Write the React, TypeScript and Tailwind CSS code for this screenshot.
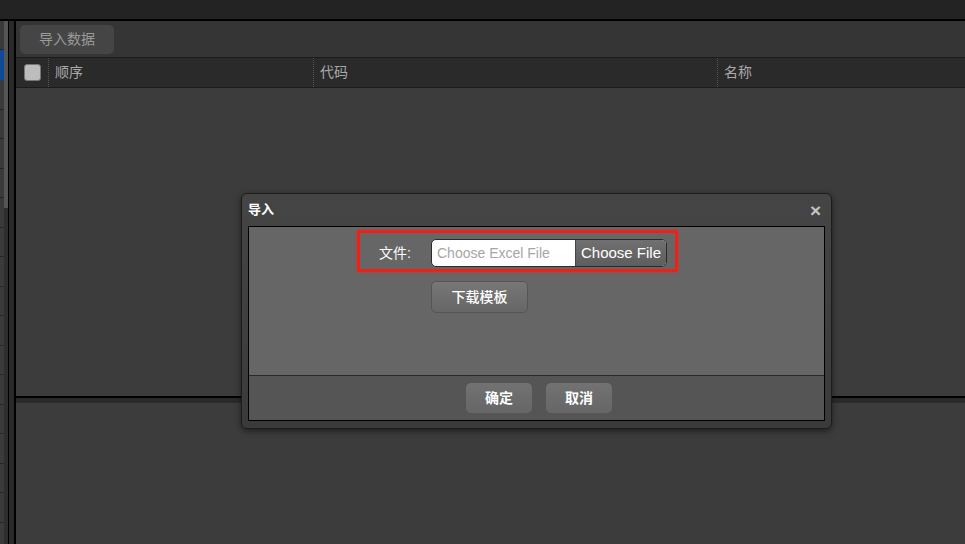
const cjk = "font-['Liberation_Sans','Noto_Sans_CJK_SC',sans-serif]";

function LeftRail() {
  const rows = Array.from({ length: 18 });
  return (
    <div className="flex h-full shrink-0 overflow-hidden">
      <div className="flex w-[4px] flex-col bg-[#3a3a3a] pt-[1px]">
        <div className="h-[28px] shrink-0 border-b border-dotted border-[#222]" />
        <div className="h-[30px] shrink-0 bg-[#0d4a9a]" />
        {rows.map((_, i) => (
          <div key={i} className="h-[29.5px] shrink-0 border-b border-dotted border-[#1e1e1e]" />
        ))}
      </div>
      <div className="flex w-[4px] flex-col bg-[#2e2e2e]">
        <div className="h-[187px] shrink-0 bg-[#555]" />
      </div>
      <div className="w-[1px] bg-black" />
      <div className="w-[5px] bg-[#2a2a2a]" />
      <div className="w-[2px] bg-black" />
    </div>
  );
}

function HeaderCell({ label, w, border = true }: { label: string; w: string; border?: boolean }) {
  return (
    <div className={`${w} flex h-full shrink-0 items-center pl-[6px] ${border ? "border-l border-dotted border-[#555]" : ""}`}>
      <span className="text-[14px] text-[#a9a9a9]">{label}</span>
    </div>
  );
}

function Grid() {
  return (
    <div className="flex min-w-0 flex-1 flex-col">
      <div className="flex h-[36px] shrink-0 items-center bg-[#353535] pl-[4px]">
        <button className="flex h-[29px] w-[94px] items-center justify-center rounded-[5px] bg-[#454545] text-[14px] text-[#9a9a9a]">
          导入数据
        </button>
      </div>
      <div className="flex h-[31px] shrink-0 border-y border-[#1b1b1b] bg-[#2a2a2a]">
        <div className="flex w-[32px] shrink-0 items-center justify-center">
          <div className="h-[17px] w-[17px] rounded-[3px] border border-[#777] bg-[#bdbdbd]" />
        </div>
        <HeaderCell label="顺序" w="w-[265px]" />
        <HeaderCell label="代码" w="w-[404px]" />
        <HeaderCell label="名称" w="flex-1" />
      </div>
      <div className="h-[308px] shrink-0 bg-[#3c3c3c]" />
      <div className="h-[2px] shrink-0 bg-black" />
      <div className="h-[5px] shrink-0 bg-[#2a2a2a]" />
      <div className="flex-1 bg-[#3c3c3c]" />
    </div>
  );
}

function ImportDialog() {
  return (
    <div className="absolute left-[241px] top-[193px] flex h-[236px] w-[591px] flex-col rounded-[6px] border border-[#1c1c1c] bg-gradient-to-b from-[#454545] to-[#3a3a3a] px-[6px] pb-[7px] shadow-[0_2px_6px_rgba(0,0,0,0.5)]">
      <div className="flex h-[32px] items-center justify-between">
        <span className="text-[13px] font-bold text-white">导入</span>
        <span className="mr-[4px] text-[19px] font-bold leading-none text-[#c4c4c4]">×</span>
      </div>
      <div className="flex flex-1 flex-col border border-black">
        <div className="relative flex-1 bg-[#666]">
          <div className="absolute left-[108px] top-[3px] h-[42px] w-[321px] rounded-[2px] border-[3px] border-[#ec2118] shadow-[0_0_3px_rgba(255,40,30,0.7)]" />
          <div className="flex items-center pl-[130px] pt-[12px]">
            <span className="w-[52px] text-[14px] text-white">文件:</span>
            <div className="flex h-[28px] w-[236px] overflow-hidden rounded-[5px] border border-[#2b2b2b] bg-white">
              <div className="flex flex-1 items-center pl-[5px] text-[14px] text-[#a6a6a6]">Choose Excel File</div>
              <div className="flex w-[91px] items-center justify-center border-l border-[#444] bg-gradient-to-b from-[#707070] to-[#5e5e5e] text-[15px] text-white">
                Choose File
              </div>
            </div>
          </div>
          <div className="pl-[182px] pt-[14px]">
            <button className="flex h-[32px] w-[97px] items-center justify-center rounded-[5px] border border-[#555] bg-gradient-to-b from-[#777] to-[#666] text-[14px] font-medium text-white">
              下载模板
            </button>
          </div>
        </div>
        <div className="flex h-[45px] items-center justify-center gap-[14px] border-t border-[#2a2a2a] bg-[#555] pl-[5px]">
          <button className="flex h-[30px] w-[66px] items-center justify-center rounded-[5px] bg-gradient-to-b from-[#727272] to-[#666] text-[14px] font-bold text-white">
            确定
          </button>
          <button className="flex h-[30px] w-[66px] items-center justify-center rounded-[5px] bg-gradient-to-b from-[#727272] to-[#666] text-[14px] font-bold text-white">
            取消
          </button>
        </div>
      </div>
    </div>
  );
}

export default function App() {
  return (
    <div className={`relative flex h-[544px] w-[965px] flex-col overflow-hidden bg-[#3c3c3c] ${cjk}`}>
      <div className="h-[19px] shrink-0 bg-[#232323]" />
      <div className="h-[2px] shrink-0 bg-black" />
      <div className="flex min-h-0 flex-1 overflow-hidden">
        <LeftRail />
        <Grid />
      </div>
      <ImportDialog />
    </div>
  );
}
